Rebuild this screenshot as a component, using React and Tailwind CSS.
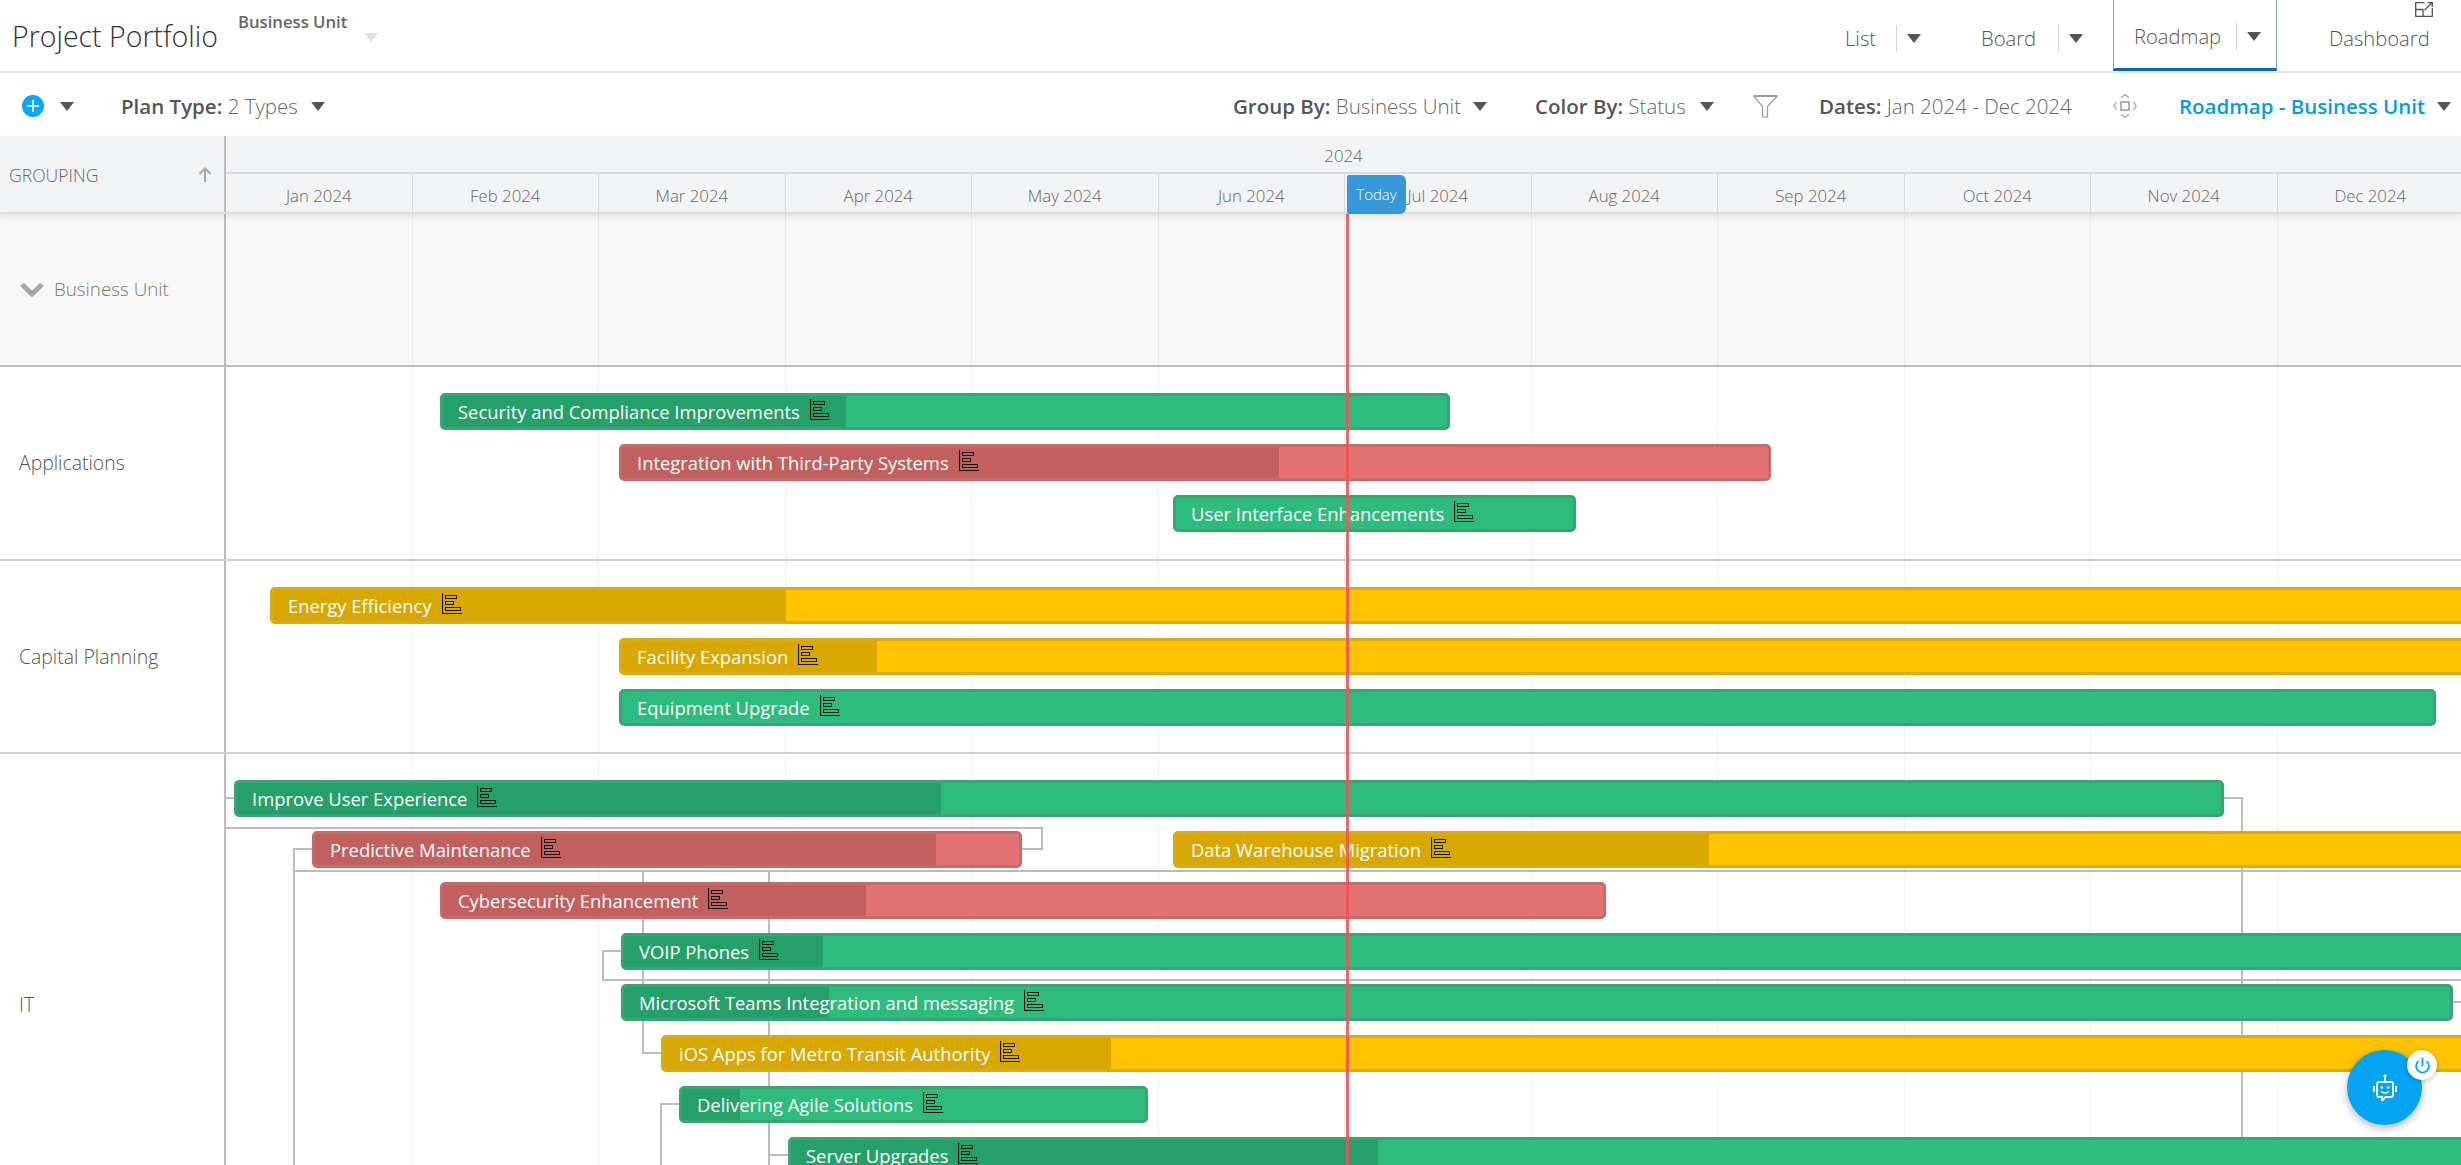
import React from "react";
import { Power } from "lucide-react";

const BASE = 226;
const C = {
  g: { fill: "bg-[#2dbc7e]", border: "border-[#38a673]", prog: "bg-[#25a06b]" },
  r: { fill: "bg-[#e57272]", border: "border-[#c76a6a]", prog: "bg-[#c25f5f]" },
  y: { fill: "bg-[#ffc300]", border: "border-[#d9ab14]", prog: "bg-[#d8a800]" },
};
const END = 2480;

const MONTHS = ["Jan", "Feb", "Mar", "Apr", "May", "Jun", "Jul", "Aug", "Sep", "Oct", "Nov", "Dec"];

const GROUPS = [
  {
    name: "Applications",
    h: "h-[194px]",
    lanes: [
      [{ t: "Security and Compliance Improvements", c: "g", x: 440, e: 1450, p: 846 }],
      [{ t: "Integration with Third-Party Systems", c: "r", x: 619, e: 1771, p: 1279 }],
      [{ t: "User Interface Enhancements", c: "g", x: 1173, e: 1576, p: 1173 }],
    ],
  },
  {
    name: "Capital Planning",
    h: "h-[193px]",
    lanes: [
      [{ t: "Energy Efficiency", c: "y", x: 270, e: END, p: 786 }],
      [{ t: "Facility Expansion", c: "y", x: 619, e: END, p: 877 }],
      [{ t: "Equipment Upgrade", c: "g", x: 619, e: 2436, p: 619 }],
    ],
  },
  {
    name: "IT",
    h: "h-[503px]",
    connectors: true,
    lanes: [
      [{ t: "Improve User Experience", c: "g", x: 234, e: 2224, p: 941 }],
      [
        { t: "Predictive Maintenance", c: "r", x: 312, e: 1022, p: 936 },
        { t: "Data Warehouse Migration", c: "y", x: 1173, e: END, p: 1709 },
      ],
      [{ t: "Cybersecurity Enhancement", c: "r", x: 440, e: 1606, p: 866 }],
      [{ t: "VOIP Phones", c: "g", x: 621, e: END, p: 823 }],
      [{ t: "Microsoft Teams Integration and messaging", c: "g", x: 621, e: 2453, p: 829 }],
      [{ t: "iOS Apps for Metro Transit Authority", c: "y", x: 661, e: END, p: 1111 }],
      [{ t: "Delivering Agile Solutions", c: "g", x: 679, e: 1148, p: 740 }],
      [{ t: "Server Upgrades", c: "g", x: 788, e: END, p: 1378 }],
    ],
  },
];

function Caret({ color = "#555", className = "" }) {
  return (
    <svg width="14" height="9" viewBox="0 0 14 9" className={`shrink-0 ${className}`}>
      <path d="M0 0H14L7 9Z" fill={color} />
    </svg>
  );
}

function GanttIcon() {
  return (
    <svg width="20" height="21" viewBox="0 0 20 21" className="ml-[10px] shrink-0 -translate-y-[3px]" fill="none" stroke="#111" strokeWidth="1">
      <path d="M0.5 0V20.5H20" strokeWidth="1.2" />
      <rect x="3.5" y="2.5" width="11" height="3" />
      <rect x="3.5" y="8.5" width="8" height="3" />
      <rect x="3.5" y="14.5" width="15" height="3" />
    </svg>
  );
}

function Bar({ item, prev }) {
  const s = C[item.c];
  const start = prev ? prev.e : BASE;
  return (
    <div
      className={`relative flex h-[37px] shrink-0 items-center overflow-hidden rounded-[5px] border-[3px] ${s.border} ${s.fill}`}
      style={{ marginLeft: item.x - start, width: item.e - item.x }}
    >
      <div className={`absolute inset-y-0 left-0 ${s.prog}`} style={{ width: Math.max(item.p - item.x - 3, 0) }} />
      <div className="relative flex items-center whitespace-nowrap pl-[15px] pt-[2px] text-[18.4px] font-normal leading-none text-white">
        <span>{item.t}</span>
        <GanttIcon />
      </div>
    </div>
  );
}

function Connectors() {
  return (
    <svg
      className="absolute left-0 top-0"
      width="2235"
      height="411"
      viewBox="226 754 2235 411"
      fill="none"
      stroke="#bcbcbc"
      strokeWidth="2"
    >
      <path d="M226 798H234" />
      <path d="M226 828H1042V849H1022" />
      <path d="M312 849H294V1165" />
      <path d="M294 871H2461" />
      <path d="M643 871V1053H661" />
      <path d="M769 871V1165" />
      <path d="M769 1155H788" />
      <path d="M621 951H603V980H2461" />
      <path d="M2224 798H2242V1165" />
      <path d="M679 1104H661V1165" />
      <path d="M2453 1002H2461" />
    </svg>
  );
}

function Group({ g }) {
  return (
    <div className={`flex ${g.h} shrink-0 border-b-2 border-[#cfcfcf]`}>
      <div className="flex w-[226px] shrink-0 items-center border-r-2 border-[#bdbdbd] pl-[19px] text-[19.4px] font-light text-[#555]">
        {g.name}
      </div>
      <div className="relative flex min-w-0 flex-1 flex-col gap-[14px] pt-[26px]">
        {g.connectors && <Connectors />}
        {g.lanes.map((lane, i) => (
          <div key={i} className="relative z-10 flex h-[37px] shrink-0">
            {lane.map((b, j) => (
              <Bar key={b.t} item={b} prev={j > 0 ? lane[j - 1] : null} />
            ))}
          </div>
        ))}
      </div>
    </div>
  );
}

function NavLabel({ label, className = "" }) {
  return <span className={`whitespace-nowrap text-[20.2px] font-light text-[#555] ${className}`}>{label}</span>;
}

function Divider() {
  return <div className="mr-[10px] h-[27px] w-px bg-[#d4d4d4]" />;
}

export default function App() {
  return (
    <div className="flex h-screen w-full flex-col overflow-hidden bg-white font-['Open_Sans','Liberation_Sans',sans-serif]">
      {/* Top header */}
      <header className="flex h-[73px] shrink-0 border-b-2 border-[#e4e4e4]">
        <div className="flex items-center pl-[12px] pt-[2px] text-[28.5px] font-light leading-none text-[#333]">Project Portfolio</div>
        <div className="ml-[20px] flex flex-col pt-[12px]">
          <span className="text-[16.7px] font-semibold leading-[20px] text-[#666]">Business Unit</span>
          <Caret color="#e2e2e2" className="ml-[126px] mt-[1px]" />
        </div>
        <nav className="ml-auto flex items-stretch pr-[33px]">
          <div className="flex items-center pt-[5px]">
            <NavLabel label="List" className="w-[31px]" />
            <div className="ml-[20px]" />
            <Divider />
            <Caret />
          </div>
          <div className="ml-[60px] flex items-center pt-[5px]">
            <NavLabel label="Board" className="w-[53px]" />
            <div className="ml-[24px]" />
            <Divider />
            <Caret />
          </div>
          <div className="ml-[30px] flex h-[71px] w-[164px] items-center border-x border-b-[3px] border-x-[#6fa6d6] border-b-[#0b6aa5] pl-[20px] pt-[5px]">
            <NavLabel label="Roadmap" className="w-[87px]" />
            <div className="ml-[15px]" />
            <Divider />
            <Caret />
          </div>
          <div className="relative ml-[52px] flex items-center pt-[5px]">
            <NavLabel label="Dashboard" className="w-[99px]" />
            <svg width="18" height="15" viewBox="0 0 18 15" className="absolute right-[-5px] top-[2px]" fill="none" stroke="#555" strokeWidth="1.3">
              <path d="M9.5 0.7H0.7V14.3H17.3V6" />
              <path d="M0.7 7.5H8V14.3" />
              <path d="M9.5 8L16.8 1M12.5 0.7H17.3V5" />
            </svg>
          </div>
        </nav>
      </header>

      {/* Toolbar */}
      <div className="flex h-[63px] shrink-0 items-center pl-[22px] pt-[3px] text-[20.5px] text-[#666]">
        <div className="flex h-[22px] w-[22px] items-center justify-center rounded-full bg-[#03a9f4]">
          <svg width="12" height="12" viewBox="0 0 12 12" stroke="#fff" strokeWidth="1.6">
            <path d="M6 0V12M0 6H12" />
          </svg>
        </div>
        <Caret className="ml-[16px]" />
        <div className="ml-[47px] w-[176px] whitespace-nowrap font-light">
          <b className="font-semibold text-[#555]">Plan Type:</b> 2 Types
        </div>
        <Caret className="ml-[14px]" />
        <div className="flex-1" />
        <div className="w-[226px] whitespace-nowrap font-light">
          <b className="font-semibold text-[#555]">Group By:</b> Business Unit
        </div>
        <Caret className="ml-[14px]" />
        <div className="ml-[48px] w-[151px] whitespace-nowrap font-light">
          <b className="font-semibold text-[#555]">Color By:</b> Status
        </div>
        <Caret className="ml-[14px]" />
        <svg width="25" height="23" viewBox="0 0 25 23" className="ml-[39px] shrink-0" fill="none" stroke="#999" strokeWidth="1.2">
          <path d="M0.8 1H24.2L14.5 11.5V22H9.5V11.5Z" />
          <path d="M0.8 1H24.2" strokeWidth="2" />
        </svg>
        <div className="ml-[41px] w-[253px] whitespace-nowrap font-light">
          <b className="font-semibold text-[#555]">Dates:</b> Jan 2024 - Dec 2024
        </div>
        <svg width="24" height="24" viewBox="0 0 24 24" className="ml-[41px] shrink-0" fill="none" stroke="#a0a0a0" strokeWidth="1.2">
          <rect x="8" y="8" width="8" height="8" strokeWidth="1.6" />
          <path d="M8 3.5L12 0.8L16 3.5M8 20.5L12 23.2L16 20.5M3.5 8L0.8 12L3.5 16M20.5 8L23.2 12L20.5 16" />
        </svg>
        <div className="ml-[42px] w-[244px] whitespace-nowrap font-semibold text-[#039be5]">Roadmap - Business Unit</div>
        <Caret className="ml-[14px]" />
        <div className="w-[10px] shrink-0" />
      </div>

      {/* Timeline header */}
      <div className="relative z-30 flex h-[78px] shrink-0 border-b-2 border-[#dcdde0] bg-[#f2f3f5] shadow-[0_3px_6px_rgba(0,0,0,0.08)]">
        <div className="flex w-[226px] shrink-0 items-center justify-between border-r-2 border-[#bdbdbd] pl-[9px] pr-[12px] pt-[2px] text-[17.6px] font-light text-[#666]">
          <span>GROUPING</span>
          <svg width="14" height="15" viewBox="0 0 14 15" fill="none" stroke="#a8a8a8" strokeWidth="2" className="-translate-y-[1px]">
            <path d="M7 15V1.5M1.5 7L7 1.5L12.5 7" />
          </svg>
        </div>
        <div className="relative min-w-0 flex-1">
          <div className="flex h-[38px] items-center justify-center border-b-2 border-[#d9dadd] pt-[3px] text-[16.8px] font-light text-[#666]">2024</div>
          <div className="flex h-[38px]">
            {MONTHS.map((m) => (
              <div key={m} className="flex w-[186.5px] shrink-0 items-center justify-center border-r border-[#d9dadd] pt-[5px] text-[16.8px] font-light text-[#666]">
                {m} 2024
              </div>
            ))}
          </div>
          <div className="absolute left-[1121px] top-[39px] flex h-[39px] w-[59px] items-center justify-center rounded-r-[6px] rounded-l-[2px] bg-[#3498db] text-[15px] font-light text-white">
            Today
          </div>
        </div>
      </div>

      {/* Body */}
      <div className="relative min-h-0 flex-1 overflow-hidden">
        <div className="flex h-[153px] shrink-0 border-b-2 border-[#bdbdbd] bg-[#f8f8f8]">
          <div className="flex w-[226px] shrink-0 items-center gap-[10px] border-r-2 border-[#bdbdbd] pl-[20px] text-[18.8px] font-light text-[#777]">
            <svg width="24" height="15" viewBox="0 0 24 15" fill="none" stroke="#a6a6a6" strokeWidth="5">
              <path d="M2 2.5L12 12L22 2.5" />
            </svg>
            Business Unit
          </div>
        </div>
        {GROUPS.map((g) => (
          <Group key={g.name} g={g} />
        ))}
        {/* month grid lines */}
        <div className="pointer-events-none absolute inset-y-0 left-[226px] flex">
          {MONTHS.map((m) => (
            <div key={m} className="w-[186.5px] shrink-0 border-r border-black/5" />
          ))}
        </div>
        {/* today line */}
        <div className="absolute inset-y-0 left-[1346px] z-20 w-[3px] bg-[#f2525a]/90" />
      </div>

      {/* Chat button */}
      <div className="absolute left-[2347px] top-[1050px] z-40 flex h-[75px] w-[75px] items-center justify-center rounded-full bg-[#03a5f2] shadow-[0_3px_8px_rgba(0,0,0,0.3)]">
        <svg width="24" height="27" viewBox="0 0 24 27" fill="none" stroke="#fff" strokeWidth="1.8">
          <circle cx="12" cy="1.8" r="1.6" fill="#fff" stroke="none" />
          <path d="M12 2V8" />
          <path d="M6 8H18Q20 8 20 10V21Q20 23 18 23H12.5L9 27V23H6Q4 23 4 21V10Q4 8 6 8Z" />
          <path d="M1 12V18M23 12V18" strokeWidth="2" />
          <circle cx="8.8" cy="13.5" r="1.3" fill="#fff" stroke="none" />
          <circle cx="15.2" cy="13.5" r="1.3" fill="#fff" stroke="none" />
          <path d="M8 17.5Q12 20.5 16 17.5" strokeWidth="1.4" />
        </svg>
      </div>
      <div className="absolute left-[2407px] top-[1050px] z-50 flex h-[30px] w-[30px] items-center justify-center rounded-full bg-white shadow-[0_1px_5px_rgba(0,0,0,0.25)]">
        <Power size={17} color="#03a5f2" strokeWidth={2.6} />
      </div>
    </div>
  );
}
